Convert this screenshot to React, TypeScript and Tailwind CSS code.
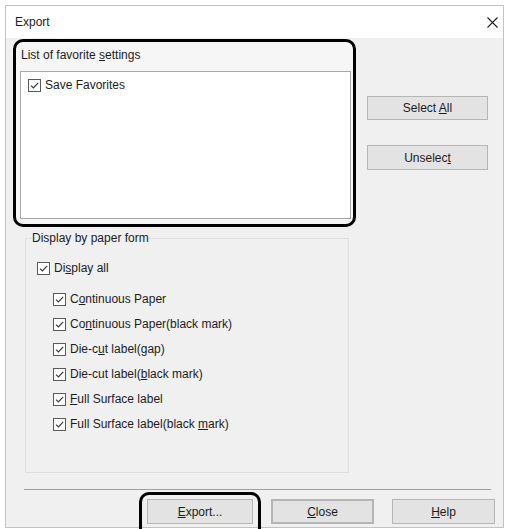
import React from "react";

function CheckBox() {
  return (
    <span className="flex h-[13px] w-[13px] shrink-0 items-center justify-center border border-[#5a5a5a] bg-white">
      <svg width="11" height="11" viewBox="0 0 11 11" fill="none">
        <path d="M2 5.6 L4.4 8 L9.2 2.8" stroke="#3a3a3a" strokeWidth="1.2" />
      </svg>
    </span>
  );
}

function CheckRow({ children, indent = false }: { children: React.ReactNode; indent?: boolean }) {
  return (
    <div className={`flex h-[16px] items-center gap-[4px] ${indent ? "pl-[16px]" : ""}`}>
      <CheckBox />
      <span className="leading-[16px]">{children}</span>
    </div>
  );
}

function Button({ children, className = "" }: { children: React.ReactNode; className?: string }) {
  return (
    <div
      className={`flex items-center justify-center border border-[#b5b5b5] bg-[#e3e3e3] leading-[16px] ${className}`}
    >
      {children}
    </div>
  );
}

export default function App() {
  return (
    <div className="h-[529px] w-[509px] overflow-hidden bg-white pl-[5px] pt-[5px] font-['Liberation_Sans',Arial,sans-serif] text-[12px] text-[#1c1c1c]">
      <div className="flex h-[523px] w-[499px] flex-col border border-[#a9cbe0] bg-[#f0f0f0]">
        {/* title bar */}
        <div className="flex h-[32px] shrink-0 items-center justify-between bg-white pl-[9px] pr-[5px]">
          <span>Export</span>
          <svg width="11" height="11" viewBox="0 0 11 11" fill="none">
            <path d="M0.5 0.5 L10.5 10.5 M10.5 0.5 L0.5 10.5" stroke="#222" strokeWidth="1.1" />
          </svg>
        </div>

        <div className="relative flex flex-1 flex-col">
          <div className="flex">
            {/* highlighted favourites list */}
            <div className="ml-[7px] mt-[1px] flex h-[188px] w-[343px] flex-col rounded-[10px] border-[3px] border-black bg-[#f6f6f6]">
              <div className="pl-[5px] pt-[5px] leading-[16px]">
                List of favorite <u>s</u>ettings
              </div>
              <div className="ml-[4px] mt-[8px] h-[148px] w-[331px] border border-[#a8a8a8] bg-white pl-[7px] pt-[5px]">
                <CheckRow>Save Favorites</CheckRow>
              </div>
            </div>

            <div className="ml-[11px] mt-[58px] flex flex-col gap-[25px]">
              <Button className="h-[24px] w-[121px]">
                <span>
                  Select <u>A</u>ll
                </span>
              </Button>
              <Button className="h-[25px] w-[121px]">
                <span>
                  Unselec<u>t</u>
                </span>
              </Button>
            </div>
          </div>

          {/* display by paper form group */}
          <fieldset className="ml-[19px] mt-[3px] h-[243px] w-[324px] border border-[#dedede] pl-[11px] pt-[14px]">
            <legend className="-ml-[5px] px-0 leading-[16px]">Display by paper form</legend>
            <CheckRow>
              Di<u>s</u>play all
            </CheckRow>
            <div className="mt-[15px] flex flex-col gap-[9px]">
              <CheckRow indent>
                C<u>o</u>ntinuous Paper
              </CheckRow>
              <CheckRow indent>
                Co<u>n</u>tinuous Paper(black mark)
              </CheckRow>
              <CheckRow indent>
                Die-c<u>u</u>t label(gap)
              </CheckRow>
              <CheckRow indent>
                Die-cut label(<u>b</u>lack mark)
              </CheckRow>
              <CheckRow indent>
                <u>F</u>ull Surface label
              </CheckRow>
              <CheckRow indent>
                Full Surface label(black <u>m</u>ark)
              </CheckRow>
            </div>
          </fieldset>

          {/* separator */}
          <div className="ml-[18px] mr-[12px] mt-[16px] h-px bg-[#a0a0a0]" />

          {/* bottom buttons */}
          <div className="mt-[9px] flex justify-end gap-[18px] pr-[8px]">
            <div className="relative">
              <Button className="h-[25px] w-[106px]">
                <span>
                  <u>E</u>xport...
                </span>
              </Button>
              <div className="absolute -bottom-[14px] -left-[8px] -right-[8px] -top-[7px] rounded-[10px] border-[3px] border-black" />
            </div>
            <Button className="h-[25px] w-[103px] border-2 border-[#3c95cc]">
              <span>
                <u>C</u>lose
              </span>
            </Button>
            <Button className="h-[25px] w-[103px]">
              <span>
                <u>H</u>elp
              </span>
            </Button>
          </div>
        </div>
      </div>
    </div>
  );
}
